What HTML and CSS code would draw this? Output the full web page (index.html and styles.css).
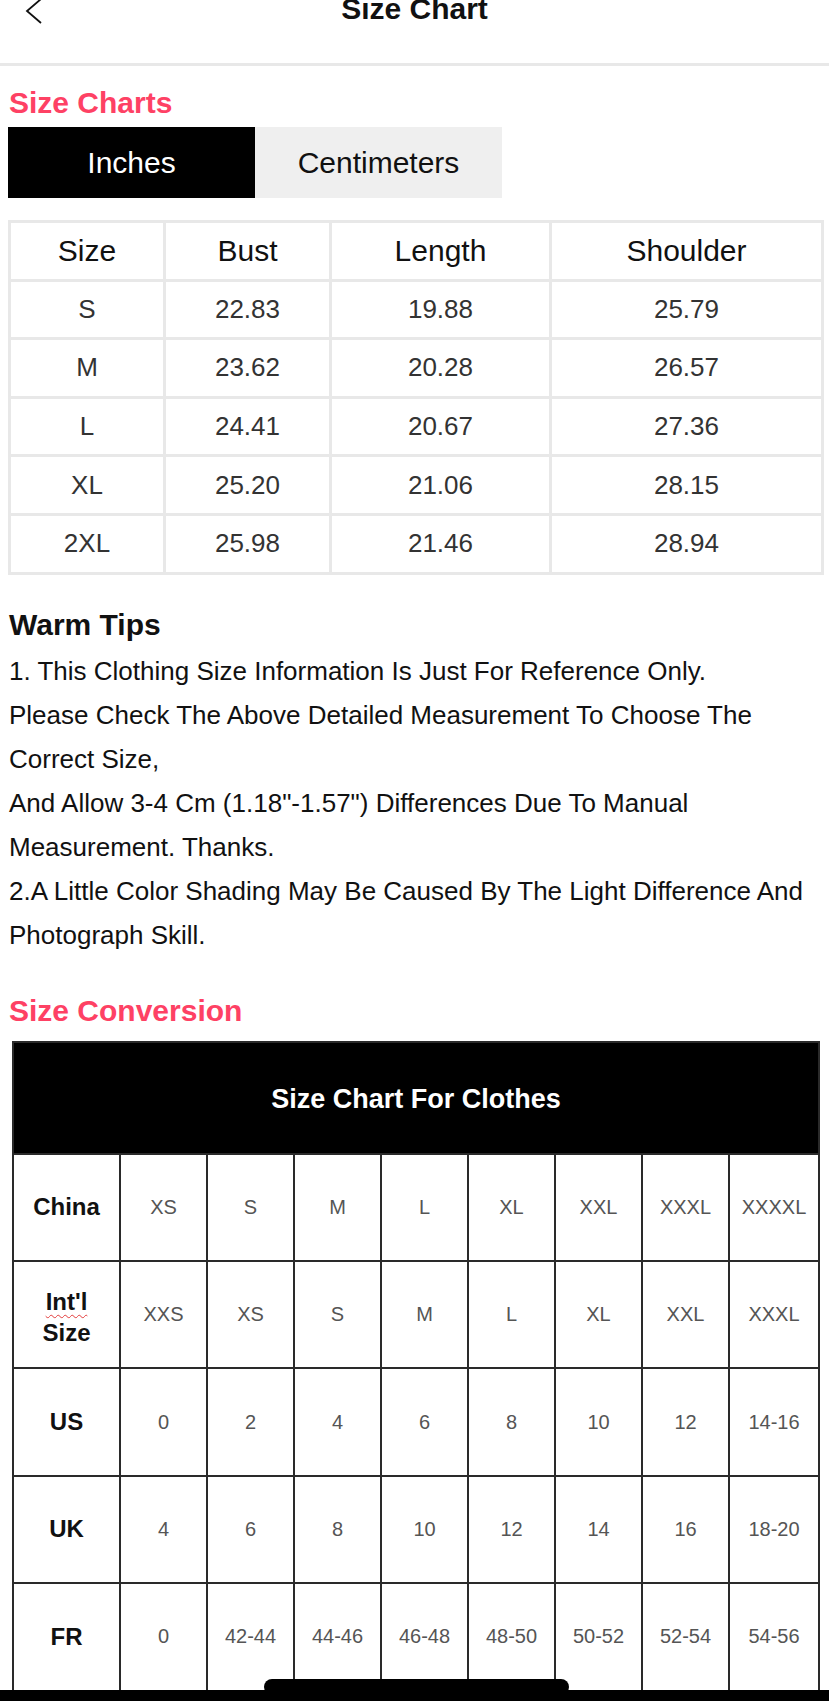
FILE: index.html
```
<!DOCTYPE html>
<html lang="en">
<head>
<meta charset="utf-8">
<title>Size Chart</title>
<link rel="stylesheet" href="styles.css">
</head>
<body>
<header class="nav">
  <div class="nav-left">
    <svg class="back" width="18" height="28" viewBox="0 0 18 28"><path d="M16 1 L2 13 L16 25" fill="none" stroke="#111" stroke-width="1.8"/></svg>
  </div>
  <div class="nav-title">Size Chart</div>
  <div class="nav-right"></div>
</header>

<main class="content">
  <h2 class="section-title first">Size Charts</h2>
  <div class="tabs">
    <div class="tab active">Inches</div>
    <div class="tab">Centimeters</div>
  </div>

  <table class="measure">
    <colgroup><col class="c1"><col class="c2"><col class="c3"><col class="c4"></colgroup>
    <thead>
      <tr><th>Size</th><th>Bust</th><th>Length</th><th>Shoulder</th></tr>
    </thead>
    <tbody>
      <tr><td>S</td><td>22.83</td><td>19.88</td><td>25.79</td></tr>
      <tr><td>M</td><td>23.62</td><td>20.28</td><td>26.57</td></tr>
      <tr><td>L</td><td>24.41</td><td>20.67</td><td>27.36</td></tr>
      <tr><td>XL</td><td>25.20</td><td>21.06</td><td>28.15</td></tr>
      <tr><td>2XL</td><td>25.98</td><td>21.46</td><td>28.94</td></tr>
    </tbody>
  </table>

  <h3 class="tips-title">Warm Tips</h3>
  <div class="tips">
    <p>1. This Clothing Size Information Is Just For Reference Only.</p>
    <p>Please Check The Above Detailed Measurement To Choose The</p>
    <p>Correct Size,</p>
    <p>And Allow 3-4 Cm (1.18"-1.57") Differences Due To Manual</p>
    <p>Measurement. Thanks.</p>
    <p>2.A Little Color Shading May Be Caused By The Light Difference And</p>
    <p>Photograph Skill.</p>
  </div>

  <h2 class="section-title second">Size Conversion</h2>
  <table class="convert">
    <colgroup>
      <col class="k1"><col class="kv"><col class="kv"><col class="kv"><col class="kv"><col class="kv"><col class="kv"><col class="kv"><col class="k9">
    </colgroup>
    <thead>
      <tr><th colspan="9" class="convert-head">Size Chart For Clothes</th></tr>
    </thead>
    <tbody>
      <tr><th>China</th><td>XS</td><td>S</td><td>M</td><td>L</td><td>XL</td><td>XXL</td><td>XXXL</td><td>XXXXL</td></tr>
      <tr><th class="two"><span class="spell">Int'l</span><br>Size</th><td>XXS</td><td>XS</td><td>S</td><td>M</td><td>L</td><td>XL</td><td>XXL</td><td>XXXL</td></tr>
      <tr><th>US</th><td>0</td><td>2</td><td>4</td><td>6</td><td>8</td><td>10</td><td>12</td><td>14-16</td></tr>
      <tr><th>UK</th><td>4</td><td>6</td><td>8</td><td>10</td><td>12</td><td>14</td><td>16</td><td>18-20</td></tr>
      <tr><th>FR</th><td>0</td><td>42-44</td><td>44-46</td><td>46-48</td><td>48-50</td><td>50-52</td><td>52-54</td><td>54-56</td></tr>
    </tbody>
  </table>
</main>

<div class="home-bar"><div class="home-pill"></div></div>
</body>
</html>
```
FILE: styles.css
```
* { box-sizing: border-box; }
html, body { margin: 0; padding: 0; background: #fff; }
body {
  font-family: "Liberation Sans", Arial, "Helvetica Neue", sans-serif;
  color: #111;
  width: 829px;
  overflow: hidden;
}

.nav {
  height: 66px;
  border-bottom: 3px solid #e8e8e8;
  display: grid;
  grid-template-columns: 1fr auto 1fr;
  align-items: start;
}
.nav-left { padding-left: 25px; }
.back { display: block; margin-top: -2px; }
.nav-title {
  font-size: 30px;
  font-weight: bold;
  line-height: 30px;
  margin-top: -6px;
  color: #111;
}

.content { padding: 0 8px; }

.section-title {
  margin: 0;
  font-size: 30px;
  font-weight: bold;
  line-height: 36px;
  color: #fe4164;
  padding-left: 1px;
}
.section-title.first { margin-top: 19px; }
.section-title.second { margin-top: 36px; }

.tabs {
  display: flex;
  margin-top: 6px;
  width: 494px;
}
.tab {
  flex: 1;
  height: 71px;
  line-height: 71px;
  text-align: center;
  font-size: 30px;
  background: #efefef;
  color: #111;
}
.tab.active { background: #000; color: #fff; }

.measure {
  margin-top: 22px;
  border-collapse: collapse;
  table-layout: fixed;
  width: 813px;
  border: 3px solid #e8e8e8;
}
.measure .c1 { width: 155px; }
.measure .c2 { width: 166px; }
.measure .c3 { width: 220px; }
.measure .c4 { width: 272px; }
.measure th, .measure td {
  border: 3px solid #e8e8e8;
  height: 58.6px;
  padding: 0;
  text-align: center;
}
.measure th { font-size: 30px; font-weight: normal; color: #111; }
.measure td { font-size: 26px; color: #333; }

.tips-title {
  margin: 28px 0 0;
  font-size: 30px;
  font-weight: bold;
  line-height: 44px;
  padding-left: 1px;
}
.tips { margin-top: 2px; padding-left: 1px; }
.tips p {
  margin: 0;
  font-size: 26px;
  line-height: 44px;
  white-space: nowrap;
  color: #111;
}

.convert {
  margin-top: 12px;
  margin-left: 4px;
  border-collapse: collapse;
  table-layout: fixed;
  width: 806px;
  border: 2px solid #222;
}
.convert .k1 { width: 107px; }
.convert .kv { width: 87px; }
.convert .k9 { width: 90px; }
.convert th, .convert td {
  border: 2px solid #2a2a2a;
  padding: 0;
  text-align: center;
  height: 107.4px;
}
.convert td { font-size: 20px; color: #555; }
.convert tbody th { font-size: 24px; font-weight: bold; color: #111; }
.convert tbody th.two { line-height: 31px; padding-top: 4px; }
.convert .convert-head {
  background: #000;
  color: #fff;
  font-size: 27px;
  font-weight: bold;
  height: 112px;
  padding-top: 3px;
}
.spell {
  text-decoration: underline wavy #e23b3b;
  text-decoration-thickness: 1px;
  text-underline-offset: 4px;
}

.home-bar {
  position: fixed;
  left: 0;
  right: 0;
  bottom: 0;
  height: 11px;
  background: #000;
}
.home-pill {
  position: absolute;
  left: 264px;
  width: 305px;
  top: -11px;
  height: 16px;
  border-radius: 8px;
  background: #000;
}
```
